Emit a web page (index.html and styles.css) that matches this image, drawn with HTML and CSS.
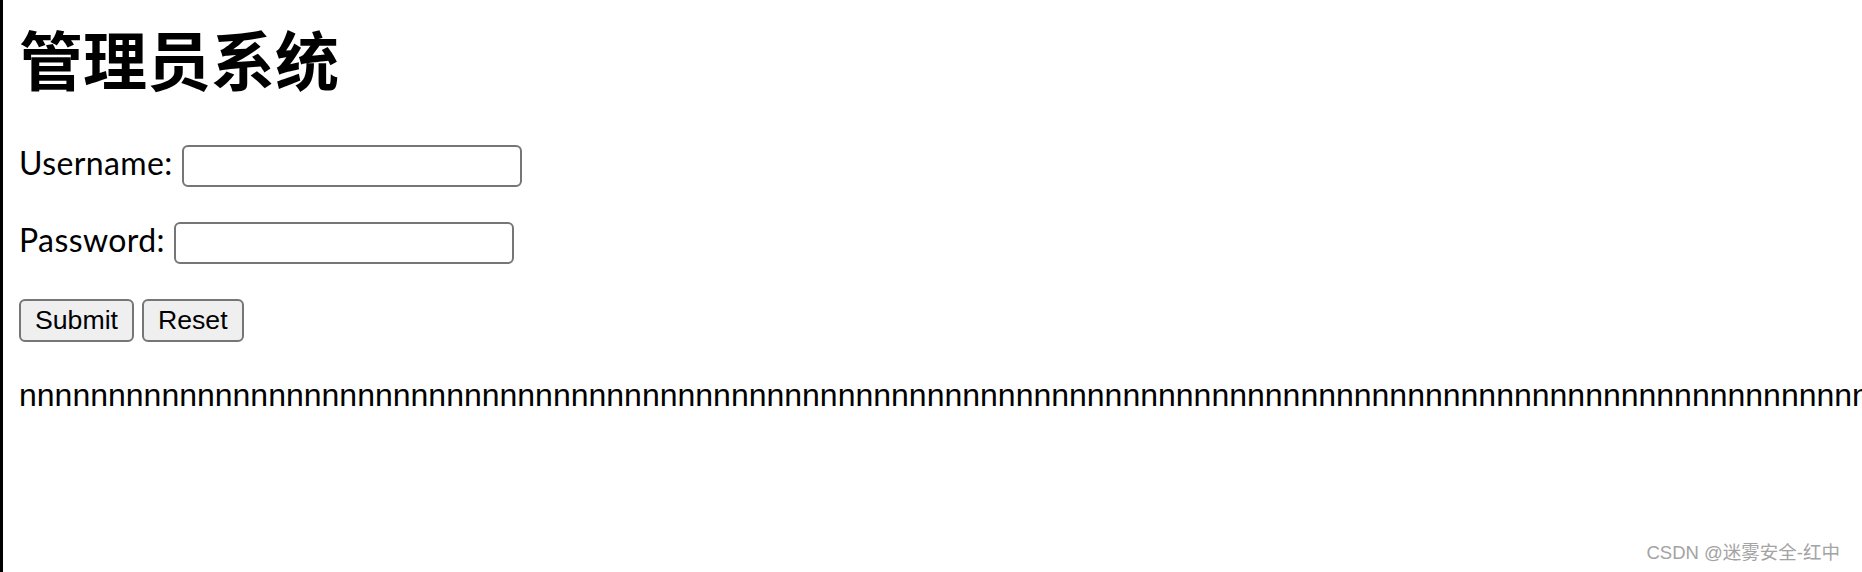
FILE: index.html
```html
<!DOCTYPE html>
<html lang="zh">
<head>
  <meta charset="UTF-8">
  <meta name="viewport" content="width=device-width, initial-scale=1.0">
  <title>管理员系统</title>
  <link rel="stylesheet" href="styles.css">
</head>
<body>
  <h1>管理员系统</h1>
  <form id="loginForm" class="login-form">
    <div class="form-row">
      <label for="username">Username:</label>
      <input type="text" id="username" name="username">
    </div>
    <div class="form-row">
      <label for="password">Password:</label>
      <input type="password" id="password" name="password">
    </div>
    <div class="form-actions">
      <button type="submit" class="btn">Submit</button>
      <button type="reset" class="btn">Reset</button>
    </div>
  </form>
  <p class="output">nnnnnnnnnnnnnnnnnnnnnnnnnnnnnnnnnnnnnnnnnnnnnnnnnnnnnnnnnnnnnnnnnnnnnnnnnnnnnnnnnnnnnnnnnnnnnnnnnnnnnnnnnnnnnnnnnnnnn</p>
  <div class="watermark">CSDN @迷雾安全-红中</div>
</body>
</html>
```

FILE: styles.css
```css
html {
  overflow: hidden;
}
body {
  margin: 0;
  min-height: 100vh;
  box-sizing: border-box;
  border-left: 3px solid #000;
  padding: 25px 0 0 16px;
  background: #fff;
  color: #000;
  font-family: 'Lato', sans-serif;
  position: relative;
}
h1 {
  margin: 0 0 56px 0;
  font-family: 'Noto Sans CJK SC', sans-serif;
  font-size: 64px;
  line-height: 64px;
  font-weight: 700;
}
.login-form {
  display: flex;
  flex-direction: column;
  gap: 35px;
}
.form-row {
  display: flex;
  align-items: center;
  gap: 9px;
  height: 42px;
}
label {
  font-size: 32px;
  line-height: 32px;
  letter-spacing: 0.4px;
  padding-bottom: 6px;
}
input[type="text"], input[type="password"] {
  width: 340px;
  height: 42px;
  box-sizing: border-box;
  margin: 0;
  padding: 2px 4px;
  border: 2px solid #767676;
  border-radius: 6px;
  background: #fff;
  font-size: 26px;
}
input[type="text"]:focus, input[type="password"]:focus {
  outline: none;
}
.form-actions {
  display: flex;
  gap: 8px;
}
.btn {
  height: 43px;
  box-sizing: border-box;
  margin: 0;
  padding: 0 14px;
  border: 2px solid #767676;
  border-radius: 6px;
  background: #efefef;
  color: #000;
  font-family: 'Liberation Sans', Arial, sans-serif;
  font-size: 26.67px;
  cursor: pointer;
}
.btn:hover {background: #e5e5e5;}
.output {
  margin: 37px 0 0 0;
  font-family: 'Liberation Sans', Arial, sans-serif;
  font-size: 32px;
  line-height: 32px;
  white-space: nowrap;
}
.watermark {
  position: absolute;
  right: 22px;
  bottom: 8px;
  color: #a3a3a3;
  font-family: 'Liberation Sans', 'Noto Sans CJK SC', sans-serif;
  font-size: 18.5px;
  line-height: 22px;
}
```
